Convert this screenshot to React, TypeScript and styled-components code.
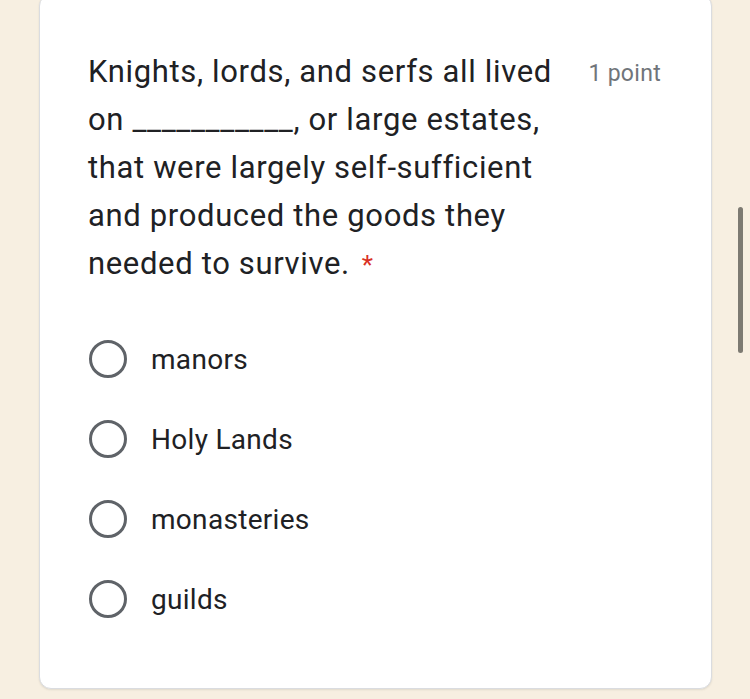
import styled, { createGlobalStyle } from 'styled-components';

const GlobalStyle = createGlobalStyle`
	html, body {
		margin: 0;
		padding: 0;
		background: #f7efe1;
		overflow: hidden;
	}
	body {
		font-family: Roboto, 'Liberation Sans', sans-serif;
	}
`;

const options = ['manors', 'Holy Lands', 'monasteries', 'guilds'];

const App = () => {
	return (
		<>
			<GlobalStyle />
			<Page>
				<Card>
					<QuestionRow>
						<Question>
							Knights, lords, and serfs all lived on ___________, or large estates, that
							were largely self-sufficient and produced the goods they needed to survive.
							<Required>*</Required>
						</Question>
						<Points>1 point</Points>
					</QuestionRow>
					<OptionList>
						{options.map((option) => (
							<Option key={option}>
								<Radio />
								<OptionLabel>{option}</OptionLabel>
							</Option>
						))}
					</OptionList>
				</Card>
			</Page>
			<ScrollThumb />
		</>
	);
};

const Page = styled.div`
	width: 750px;
	height: 699px;
	padding-left: 39px;
	box-sizing: border-box;
`;

const Card = styled.div`
	width: 673px;
	margin-top: -6px;
	box-sizing: border-box;
	padding: 53px 50px 49px 48px;
	background: #ffffff;
	border: 1px solid #dadce0;
	border-radius: 12px;
	box-shadow: 0 1px 2px rgba(60, 64, 67, 0.12);
`;

const QuestionRow = styled.div`
	display: flex;
	justify-content: space-between;
	align-items: flex-start;
`;

const Question = styled.div`
	width: 470px;
	font-size: 31px;
	line-height: 48px;
	color: #202124;
	letter-spacing: 0.65px;
`;

const Required = styled.span`
	display: inline-block;
	color: #d93025;
	margin-left: 12px;
	font-size: 26px;
`;

const Points = styled.div`
	padding-top: 2px;
	font-size: 23px;
	line-height: 48px;
	color: #70757a;
	letter-spacing: 0.3px;
	white-space: nowrap;
`;

const OptionList = styled.div`
	display: flex;
	flex-direction: column;
	margin-top: 30px;
`;

const Option = styled.label`
	display: flex;
	align-items: center;
	height: 80px;
	gap: 24px;
	padding-left: 1px;
`;

const Radio = styled.span`
	width: 38px;
	height: 38px;
	box-sizing: border-box;
	border: 3.5px solid #5f6368;
	border-radius: 50%;
	flex-shrink: 0;
`;

const OptionLabel = styled.span`
	font-size: 28px;
	color: #202124;
	letter-spacing: 0.3px;
`;

const ScrollThumb = styled.div`
	position: fixed;
	left: 738px;
	top: 207px;
	width: 5px;
	height: 146px;
	border-radius: 3px;
	background: #7d7a72;
`;

export default App;
